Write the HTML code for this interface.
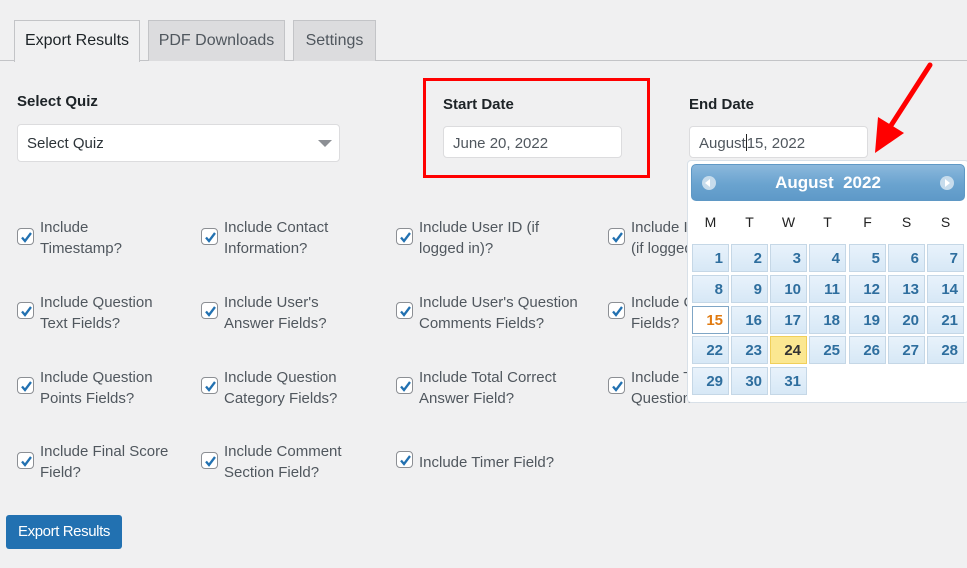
<!DOCTYPE html>
<html><head><meta charset="utf-8">
<style>
*{box-sizing:border-box;margin:0;padding:0}
body{width:967px;height:568px;background:#f0f0f1;font-family:"Liberation Sans",sans-serif;color:#3c434a;position:relative;overflow:hidden}
.a{position:absolute}
.tab{position:absolute;top:20px;height:41px;border:1px solid #c3c4c7;border-bottom:none;background:#dcdcde;font-size:16px;color:#50575e;line-height:40px;text-align:center}
.lbl{font-size:15px;font-weight:bold;color:#1d2327}
.inp{position:absolute;background:#fff;border:1px solid #dcdcde;border-radius:4px;font-size:15px;color:#50575e;padding-left:9px;line-height:34px}
.cb{position:absolute;width:17px;height:17px;border:1px solid #8c8f94;border-radius:4px;background:#fff}
.cb svg{position:absolute;left:0;top:0}
.t{position:absolute;font-size:15px;line-height:21px;color:#50575e}
.cal{position:absolute;left:687px;top:160px;width:282px;height:243px;background:#fff;border:1px solid #d8e0e8;border-radius:4px;z-index:5}
.hd{position:absolute;left:3px;top:3px;width:274px;height:37px;border:1px solid #5f98c5;border-radius:5px;background:linear-gradient(#8bb8dc,#6aa3cf 55%,#5e99c8);color:#fff;font-weight:bold;font-size:17px;text-align:center;line-height:35px}
.nv{position:absolute;top:11px;width:14px;height:14px;border-radius:50%;background:#c7dcec}
.dn{position:absolute;top:53px;width:37px;text-align:center;font-size:14px;color:#222}
.c{position:absolute;width:37px;height:28px;border:1px solid #c5d7e6;background:linear-gradient(#e8f2fb,#d7e8f6);color:#2e6e9e;font-size:15px;font-weight:bold;text-align:right;padding-right:5px;line-height:27px}
</style></head><body>
<div class="a" style="left:0;top:60px;width:967px;height:1px;background:#c3c4c7"></div>
<div class="tab" style="left:14px;width:126px;background:#f0f0f1;color:#1d2327;height:42px">Export Results</div>
<div class="tab" style="left:148px;width:137px">PDF Downloads</div>
<div class="tab" style="left:293px;width:83px">Settings</div>

<div class="a lbl" style="left:17px;top:93px">Select Quiz</div>
<div class="inp" style="left:17px;top:124px;width:323px;height:38px;line-height:37px;color:#2c3338">Select Quiz</div>
<div class="a" style="left:318px;top:140px;width:0;height:0;border-left:7px solid transparent;border-right:7px solid transparent;border-top:7px solid #8c8f94"></div>

<div class="a" style="left:423px;top:78px;width:227px;height:100px;border:3px solid #f00"></div>
<div class="a lbl" style="left:443px;top:96px">Start Date</div>
<div class="inp" style="left:443px;top:126px;width:179px;height:32px">June 20, 2022</div>

<div class="a lbl" style="left:689px;top:96px">End Date</div>
<div class="inp" style="left:689px;top:126px;width:179px;height:32px">August<span style="display:inline-block;width:1px;height:17px;background:#222;vertical-align:-3px"></span>15, 2022</div>

<svg class="a" style="left:860px;top:55px;z-index:6" width="80" height="110"><line x1="70" y1="10" x2="30" y2="72" stroke="#f00" stroke-width="5" stroke-linecap="round"/><polygon points="15,98 18,62 44,78" fill="#f00"/></svg>

<div class="cb" style="left:17px;top:228px"><svg width="17" height="17"><path d="M4 8.5l3 3.5 6-8" stroke="#2271b1" stroke-width="2.3" fill="none"/></svg></div>
<div class="t" style="left:40px;top:217px">Include<br>Timestamp?</div>
<div class="cb" style="left:201px;top:228px"><svg width="17" height="17"><path d="M4 8.5l3 3.5 6-8" stroke="#2271b1" stroke-width="2.3" fill="none"/></svg></div>
<div class="t" style="left:224px;top:217px">Include Contact<br>Information?</div>
<div class="cb" style="left:396px;top:228px"><svg width="17" height="17"><path d="M4 8.5l3 3.5 6-8" stroke="#2271b1" stroke-width="2.3" fill="none"/></svg></div>
<div class="t" style="left:419px;top:217px">Include User ID (if<br>logged in)?</div>
<div class="cb" style="left:608px;top:228px"><svg width="17" height="17"><path d="M4 8.5l3 3.5 6-8" stroke="#2271b1" stroke-width="2.3" fill="none"/></svg></div>
<div class="t" style="left:631px;top:217px">Include IP Address<br>(if logged in)?</div>

<div class="cb" style="left:17px;top:302px"><svg width="17" height="17"><path d="M4 8.5l3 3.5 6-8" stroke="#2271b1" stroke-width="2.3" fill="none"/></svg></div>
<div class="t" style="left:40px;top:292px">Include Question<br>Text Fields?</div>
<div class="cb" style="left:201px;top:302px"><svg width="17" height="17"><path d="M4 8.5l3 3.5 6-8" stroke="#2271b1" stroke-width="2.3" fill="none"/></svg></div>
<div class="t" style="left:224px;top:292px">Include User's<br>Answer Fields?</div>
<div class="cb" style="left:396px;top:302px"><svg width="17" height="17"><path d="M4 8.5l3 3.5 6-8" stroke="#2271b1" stroke-width="2.3" fill="none"/></svg></div>
<div class="t" style="left:419px;top:292px">Include User's Question<br>Comments Fields?</div>
<div class="cb" style="left:608px;top:302px"><svg width="17" height="17"><path d="M4 8.5l3 3.5 6-8" stroke="#2271b1" stroke-width="2.3" fill="none"/></svg></div>
<div class="t" style="left:631px;top:292px">Include Correct<br>Fields?</div>

<div class="cb" style="left:17px;top:377px"><svg width="17" height="17"><path d="M4 8.5l3 3.5 6-8" stroke="#2271b1" stroke-width="2.3" fill="none"/></svg></div>
<div class="t" style="left:40px;top:367px">Include Question<br>Points Fields?</div>
<div class="cb" style="left:201px;top:377px"><svg width="17" height="17"><path d="M4 8.5l3 3.5 6-8" stroke="#2271b1" stroke-width="2.3" fill="none"/></svg></div>
<div class="t" style="left:224px;top:367px">Include Question<br>Category Fields?</div>
<div class="cb" style="left:396px;top:377px"><svg width="17" height="17"><path d="M4 8.5l3 3.5 6-8" stroke="#2271b1" stroke-width="2.3" fill="none"/></svg></div>
<div class="t" style="left:419px;top:367px">Include Total Correct<br>Answer Field?</div>
<div class="cb" style="left:608px;top:377px"><svg width="17" height="17"><path d="M4 8.5l3 3.5 6-8" stroke="#2271b1" stroke-width="2.3" fill="none"/></svg></div>
<div class="t" style="left:631px;top:367px">Include Total<br>Questions?</div>

<div class="cb" style="left:17px;top:452px"><svg width="17" height="17"><path d="M4 8.5l3 3.5 6-8" stroke="#2271b1" stroke-width="2.3" fill="none"/></svg></div>
<div class="t" style="left:40px;top:441px">Include Final Score<br>Field?</div>
<div class="cb" style="left:201px;top:452px"><svg width="17" height="17"><path d="M4 8.5l3 3.5 6-8" stroke="#2271b1" stroke-width="2.3" fill="none"/></svg></div>
<div class="t" style="left:224px;top:441px">Include Comment<br>Section Field?</div>
<div class="cb" style="left:396px;top:451px"><svg width="17" height="17"><path d="M4 8.5l3 3.5 6-8" stroke="#2271b1" stroke-width="2.3" fill="none"/></svg></div>
<div class="t" style="left:419px;top:452px">Include Timer Field?</div>

<div class="a" style="left:6px;top:515px;width:116px;height:34px;background:#2271b1;border-radius:3px;color:#fff;font-size:15px;text-align:center;line-height:33px;letter-spacing:-0.4px">Export Results</div>

<div class="cal">
<div class="hd">August&nbsp; 2022
<div class="nv" style="left:10px"><div style="position:absolute;left:3px;top:3px;border-top:4px solid transparent;border-bottom:4px solid transparent;border-right:5px solid #fff"></div></div>
<div class="nv" style="right:10px"><div style="position:absolute;left:5px;top:3px;border-top:4px solid transparent;border-bottom:4px solid transparent;border-left:5px solid #fff"></div></div>
</div>
<div class="dn" style="left:4px">M</div><div class="dn" style="left:43px">T</div><div class="dn" style="left:82px">W</div><div class="dn" style="left:121px">T</div><div class="dn" style="left:161px">F</div><div class="dn" style="left:200px">S</div><div class="dn" style="left:239px">S</div>

<div class="c" style="left:4px;top:83px">1</div><div class="c" style="left:43px;top:83px">2</div><div class="c" style="left:82px;top:83px">3</div><div class="c" style="left:121px;top:83px">4</div><div class="c" style="left:161px;top:83px">5</div><div class="c" style="left:200px;top:83px">6</div><div class="c" style="left:239px;top:83px">7</div>
<div class="c" style="left:4px;top:114px">8</div><div class="c" style="left:43px;top:114px">9</div><div class="c" style="left:82px;top:114px">10</div><div class="c" style="left:121px;top:114px">11</div><div class="c" style="left:161px;top:114px">12</div><div class="c" style="left:200px;top:114px">13</div><div class="c" style="left:239px;top:114px">14</div>
<div class="c" style="left:4px;top:145px;background:#fff;border-color:#7fa6c6;color:#e07a10">15</div><div class="c" style="left:43px;top:145px">16</div><div class="c" style="left:82px;top:145px">17</div><div class="c" style="left:121px;top:145px">18</div><div class="c" style="left:161px;top:145px">19</div><div class="c" style="left:200px;top:145px">20</div><div class="c" style="left:239px;top:145px">21</div>
<div class="c" style="left:4px;top:175px">22</div><div class="c" style="left:43px;top:175px">23</div><div class="c" style="left:82px;top:175px;background:#fbe791;border-color:#f0cf5a;color:#333">24</div><div class="c" style="left:121px;top:175px">25</div><div class="c" style="left:161px;top:175px">26</div><div class="c" style="left:200px;top:175px">27</div><div class="c" style="left:239px;top:175px">28</div>
<div class="c" style="left:4px;top:206px">29</div><div class="c" style="left:43px;top:206px">30</div><div class="c" style="left:82px;top:206px">31</div>
</div>
</body></html>
